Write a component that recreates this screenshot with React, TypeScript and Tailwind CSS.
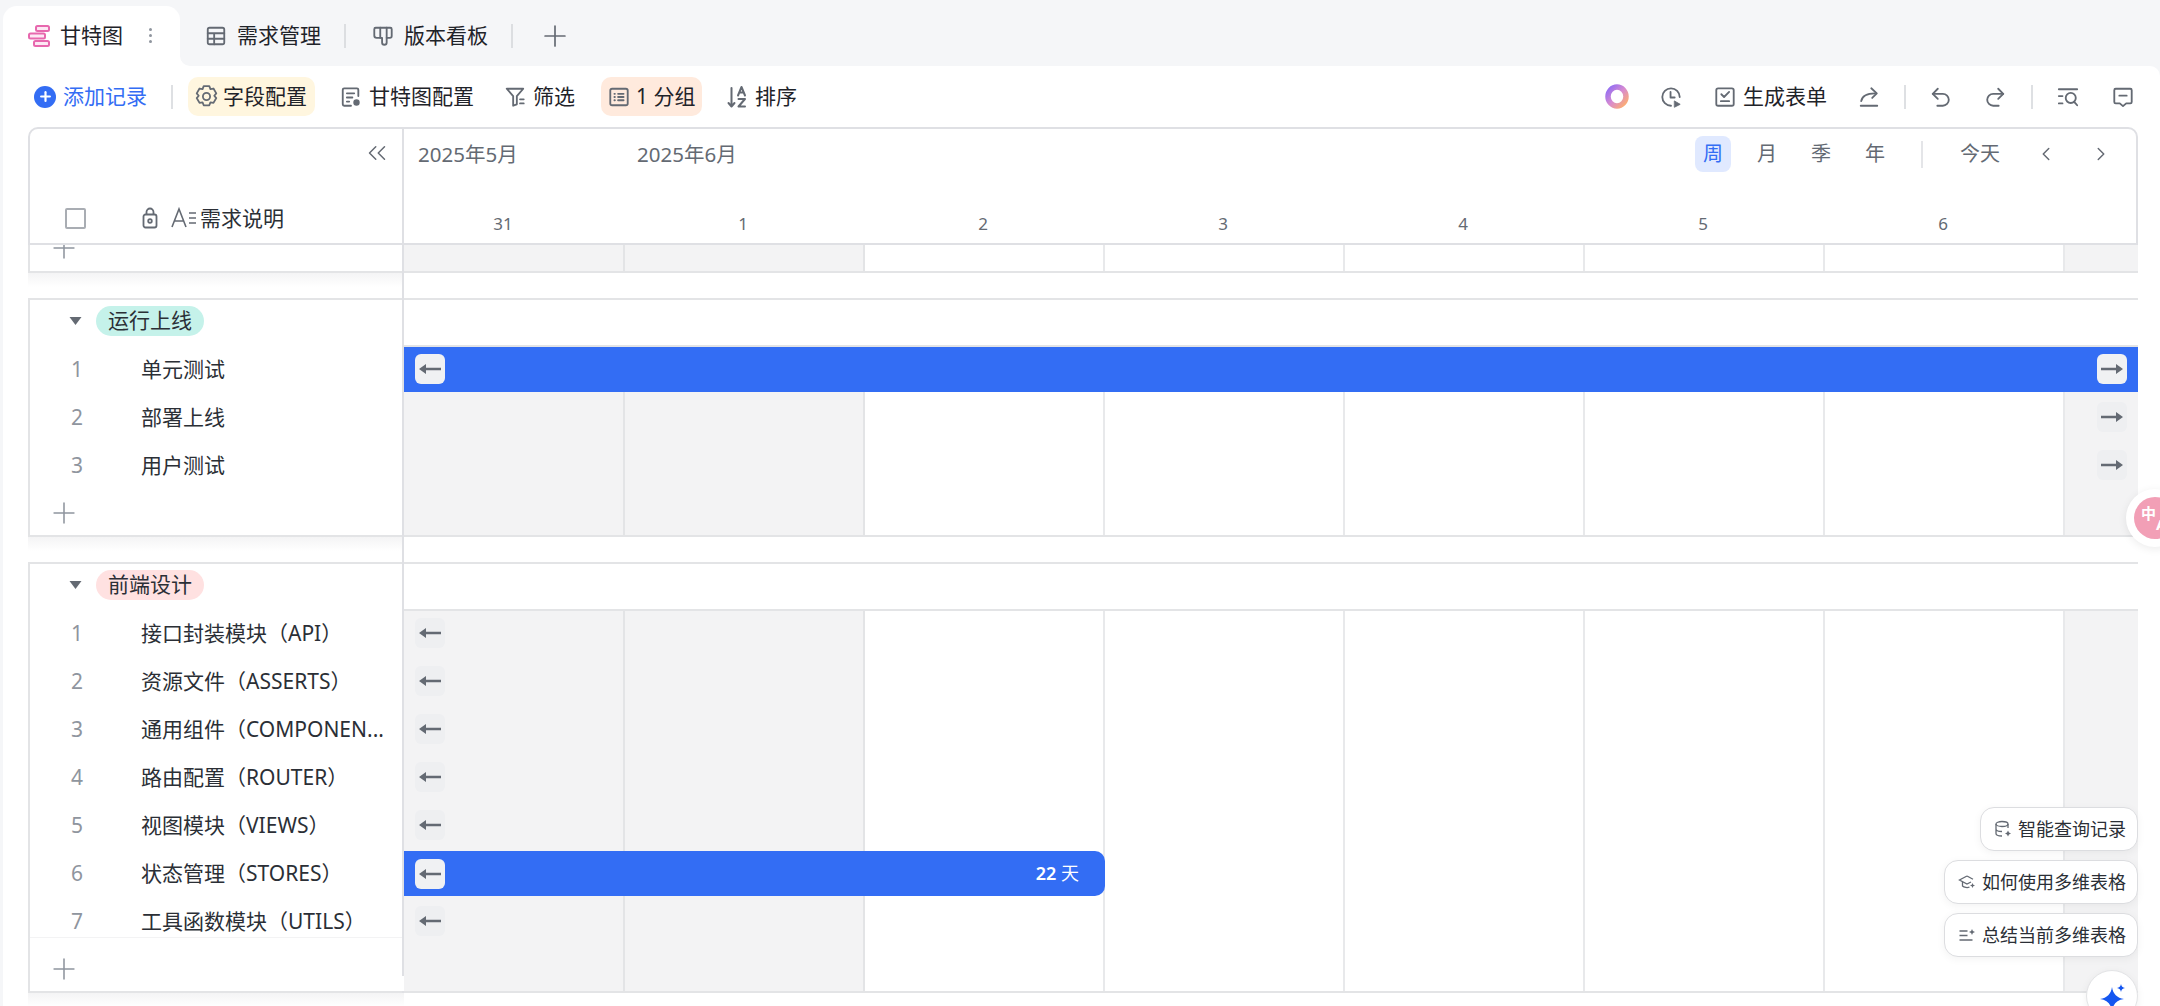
import type { ReactNode } from "react";
import { Plus, ChevronLeft, ChevronRight, ChevronsLeft } from "lucide-react";

const groupOne = ["单元测试", "部署上线", "用户测试"];
const groupTwo = [
  "接口封装模块（API）",
  "资源文件（ASSERTS）",
  "通用组件（COMPONEN...",
  "路由配置（ROUTER）",
  "视图模块（VIEWS）",
  "状态管理（STORES）",
  "工具函数模块（UTILS）",
];
const days = ["31", "1", "2", "3", "4", "5", "6"];

function Ico({ size = 22, children }: { size?: number; children: ReactNode }) {
  return (
    <svg
      width={size}
      height={size}
      viewBox="0 0 24 24"
      fill="none"
      stroke="#646a73"
      strokeWidth="2"
      strokeLinecap="round"
      strokeLinejoin="round"
      className="shrink-0"
    >
      {children}
    </svg>
  );
}

function GanttIcon() {
  return (
    <svg width="22" height="24" viewBox="0 0 22 24" fill="#fde8f4" stroke="#e768ae" strokeWidth="2" className="shrink-0">
      <rect x="8" y="2" width="13" height="5" rx="1.5" />
      <rect x="1" y="9.5" width="16" height="5" rx="1.5" />
      <rect x="6" y="17" width="15" height="5" rx="1.5" />
    </svg>
  );
}

function TableIcon() {
  return (
    <Ico>
      <rect x="3" y="3" width="18" height="18" rx="2" />
      <path d="M3 9h18M3 15h18M10 9v12" />
    </Ico>
  );
}

function KanbanIcon() {
  return (
    <Ico>
      <path d="M4 3h16a1.500 1.500 0 0 1 1.500 1.500V12a2 2 0 0 1-2 2H16v5a2.500 2.500 0 0 1-5 0V14H5a2.500 2.500 0 0 1-2.500-2.500V4.500A1.500 1.500 0 0 1 4 3z" />
      <path d="M9 3v11M16 3v11" />
    </Ico>
  );
}

function GearIcon() {
  return (
    <Ico size={27}>
      <path d="M9.500 2.800h5l1 2.600 2.700-.5 2.500 4.300-1.800 2.100 1.800 2.100-2.500 4.300-2.700-.5-1 2.600h-5l-1-2.600-2.700.5-2.500-4.300 1.800-2.100-1.800-2.100 2.500-4.300 2.700.5z" strokeWidth="1.600" />
      <circle cx="12" cy="12" r="3.200" strokeWidth="1.600" />
    </Ico>
  );
}

function DocGearIcon() {
  return (
    <Ico>
      <path d="M20 11V4a1.500 1.500 0 0 0-1.500-1.500h-14A1.500 1.500 0 0 0 3 4v16a1.500 1.500 0 0 0 1.500 1.500H12" />
      <path d="M7.500 8h8M7.500 12.500h6M7.500 17h2.500" />
      <circle cx="18" cy="18" r="2.600" fill="#646a73" strokeWidth="1.800" />
    </Ico>
  );
}

function FilterIcon() {
  return (
    <Ico>
      <path d="M3 3h18l-7 8v9l-4 1.500V11z" />
      <path d="M17.500 14.500h4M17.500 19h4" />
    </Ico>
  );
}

function GroupIcon() {
  return (
    <Ico>
      <rect x="2.500" y="3" width="19" height="18" rx="2" />
      <path d="M7 8.500h.5M7 12h.5M7 15.500h.5M11 8.500h6M11 12h6M11 15.500h6" />
    </Ico>
  );
}

function SortIcon() {
  return (
    <svg width="22" height="24" viewBox="0 0 22 24" fill="none" stroke="#646a73" strokeWidth="2" strokeLinecap="round" strokeLinejoin="round" className="shrink-0">
      <path d="M4.500 3v18M1.500 18l3 3.500 3-3.500" />
      <path d="M11 10.500 14.500 2l3.500 8.500M12.300 7.500h4.500" />
      <path d="M11.500 14h6.500l-6.500 7.500h6.500" />
    </svg>
  );
}

function RingIcon() {
  return (
    <svg width="24" height="25" viewBox="0 0 24 25" className="shrink-0">
      <defs>
        <linearGradient id="ring" x1="0" y1="0" x2="1" y2="1">
          <stop offset="0" stopColor="#8f6cf5" />
          <stop offset="0.5" stopColor="#d88bd0" />
          <stop offset="1" stopColor="#ffb06a" />
        </linearGradient>
      </defs>
      <ellipse cx="12" cy="12.500" rx="9" ry="9.500" fill="none" stroke="url(#ring)" strokeWidth="5.500" />
    </svg>
  );
}

function ClockIcon() {
  return (
    <Ico>
      <path d="M12 21.500a9.500 9.500 0 1 1 9.500-9.500" />
      <path d="M11.500 6.500v6h4.500" />
      <path d="M16 16.500l6 3.500-6 3z" fill="#646a73" strokeWidth="1" />
    </Ico>
  );
}

function FormIcon() {
  return (
    <Ico>
      <rect x="2.500" y="2.500" width="19" height="19" rx="2" />
      <path d="M8 9l3 3 5.500-5.500M7.500 16.500h9" />
    </Ico>
  );
}

function ShareIcon() {
  return (
    <Ico>
      <path d="M3 21.500h18" />
      <path d="M3.500 16.500c1-5.500 5-8.500 15-8.500" />
      <path d="M14.500 2.500l6 5.500-5 5" />
    </Ico>
  );
}

function UndoIcon() {
  return (
    <Ico>
      <path d="M8.500 3 3 8.500 8.500 14" />
      <path d="M3 8.500h11a6.500 6.500 0 0 1 0 13H8" />
    </Ico>
  );
}

function RedoIcon() {
  return (
    <Ico>
      <path d="M15.500 3 21 8.500 15.500 14" />
      <path d="M21 8.500H10a6.500 6.500 0 0 0 0 13h6" />
    </Ico>
  );
}

function SearchListIcon() {
  return (
    <Ico>
      <path d="M2 3.500h20M2 11h4M2 19h4" />
      <circle cx="15" cy="13" r="5.500" />
      <path d="M19 17.500l3 3.500" />
    </Ico>
  );
}

function CommentIcon() {
  return (
    <Ico>
      <path d="M4 3h16a1.500 1.500 0 0 1 1.500 1.500v13a1.500 1.500 0 0 1-1.500 1.500h-4.500L12 22l-3.500-3H4a1.500 1.500 0 0 1-1.500-1.500v-13A1.500 1.500 0 0 1 4 3z" />
      <path d="M8 10.500h8" />
    </Ico>
  );
}

function LockIcon() {
  return (
    <svg width="16" height="22" viewBox="0 0 16 22" fill="none" stroke="#646a73" strokeWidth="1.800" className="shrink-0">
      <rect x="1.500" y="7.500" width="13" height="13" rx="2" />
      <path d="M4.500 7.500V5a3.500 3.500 0 0 1 7 0v2.500" />
      <circle cx="8" cy="14" r="1.800" />
    </svg>
  );
}

function TextFieldIcon() {
  return (
    <svg width="26" height="22" viewBox="0 0 26 22" fill="none" stroke="#646a73" strokeWidth="1.600" className="shrink-0">
      <path d="M1 20 8 2l7 18M3.500 14h9" />
      <path d="M18 6h7M18 11h7M18 16h7" />
    </svg>
  );
}

function Caret() {
  return (
    <svg width="13" height="10" viewBox="0 0 13 10" fill="#646a73" className="shrink-0">
      <path d="M0.500 1h12L6.500 9z" />
    </svg>
  );
}

function Spark({ className }: { className: string }) {
  return (
    <svg viewBox="0 0 24 24" className={className} fill="currentColor">
      <path d="M12 0c1 7 5 11 12 12-7 1-11 5-12 12-1-7-5-11-12-12 7-1 11-5 12-12z" />
    </svg>
  );
}

function Arrow({ right = false }: { right?: boolean }) {
  return (
    <svg width="22" height="12" viewBox="0 0 22 12" fill="#646a73" className={right ? "rotate-180" : ""}>
      <path d="M0 6l7-5v3.800h15v2.400H7V11z" />
    </svg>
  );
}

function Handle({ right = false, solid = false }: { right?: boolean; solid?: boolean }) {
  return (
    <div className={`flex h-[30px] w-[30px] items-center justify-center rounded-[6px] ${solid ? "bg-[#f0f1f3]" : "bg-[#eeeff1]"}`}>
      <Arrow right={right} />
    </div>
  );
}

function TabDivider() {
  return <div className="h-6 w-0.5 bg-[#dcdee1]" />;
}

function ToolDivider({ className }: { className: string }) {
  return <div className={`h-[24px] w-0.5 bg-[#dee0e3] ${className}`} />;
}

function Row({ index, name }: { index: number; name: string }) {
  return (
    <div className="flex h-12 items-center">
      <span className="w-[94px] text-center text-[21px] text-[#8f959e]">{index}</span>
      <span className="ml-[17px] whitespace-nowrap text-[21px] text-[#2b2f36]">{name}</span>
    </div>
  );
}

function AddRow({ className }: { className: string }) {
  return (
    <div className={`flex items-center pl-[17px] ${className}`}>
      <Plus size={34} strokeWidth={1.1} color="#8f959e" />
    </div>
  );
}

function GroupHead({ label, tone }: { label: string; tone: string }) {
  return (
    <div className="flex h-[46px] items-center pb-[4px] pl-[39px]">
      <Caret />
      <span className={`ml-[14px] flex h-[30px] w-[108px] items-center justify-center rounded-full text-[21px] text-[#2b2f36] ${tone}`}>
        {label}
      </span>
    </div>
  );
}

function Shade({ className = "" }: { className?: string }) {
  return <div className={`h-[14px] bg-gradient-to-b from-[#f4f4f5] to-white ${className}`} />;
}

function Columns({ className, children }: { className: string; children?: ReactNode }) {
  return (
    <div className={`relative flex border-b-2 border-[#e3e4e6] ${className}`}>
      <div className="w-[221px] border-r-2 border-[#e3e4e6] bg-[#f3f3f4]" />
      <div className="w-[240px] border-r-2 border-[#e3e4e6] bg-[#f3f3f4]" />
      {[0, 1, 2, 3, 4].map((c) => (
        <div key={c} className="w-[240px] border-r-2 border-[#e8e9eb] bg-white" />
      ))}
      <div className="flex-1 bg-[#f3f3f4]" />
      {children}
    </div>
  );
}

function Chip({ icon, label }: { icon: ReactNode; label: string }) {
  return (
    <div className="flex h-[44px] items-center gap-[6px] rounded-[14px] border border-[#dcdde0] bg-white pl-[13px] pr-[11px] text-[18px] text-[#2b2f36] shadow-[0_2px_8px_rgba(0,0,0,0.05)]">
      {icon}
      {label}
    </div>
  );
}

export default function App() {
  return (
    <div className="relative h-screen w-full overflow-hidden bg-[#f5f6f8] text-[#1f2329] [font-family:'Noto_Sans','Noto_Sans_CJK_SC',sans-serif]">
      {/* tabs */}
      <div className="flex h-[66px] pl-[3px] text-[21px]">
        <div className="relative mt-[6px] flex w-[177px] items-center rounded-t-[14px] bg-white pb-[1px] pl-[25px]">
          <GanttIcon />
          <span className="ml-[10px]">甘特图</span>
          <span className="ml-[26px] flex flex-col gap-[3px]">
            <i className="h-[3px] w-[3px] rounded-full bg-[#8f959e]" />
            <i className="h-[3px] w-[3px] rounded-full bg-[#8f959e]" />
            <i className="h-[3px] w-[3px] rounded-full bg-[#8f959e]" />
          </span>
          <div className="absolute bottom-0 left-full h-[10px] w-[10px] bg-white">
            <div className="h-full w-full rounded-bl-[10px] bg-[#f5f6f8]" />
          </div>
        </div>
        <div className="ml-[25px] flex items-center gap-[10px] pt-[6px]">
          <TableIcon />
          <span>需求管理</span>
          <div className="ml-[13px]"><TabDivider /></div>
          <div className="ml-[16px]"><KanbanIcon /></div>
          <span>版本看板</span>
          <div className="ml-[13px]"><TabDivider /></div>
          <Plus size={34} strokeWidth={1.2} color="#646a73" className="ml-[15px]" />
        </div>
      </div>

      {/* white panel */}
      <div className="ml-[3px] h-[940px] rounded-tr-[10px] bg-white">
        <div className="flex h-[61px] items-center pl-[31px] pr-[26px] text-[21px]">
          <div className="flex h-[22px] w-[22px] items-center justify-center rounded-full bg-[#336df4]">
            <Plus size={15} strokeWidth={3.5} color="white" />
          </div>
          <span className="ml-[7px] text-[#336df4]">添加记录</span>
          <ToolDivider className="ml-[24px]" />
          <div className="ml-[15px] flex h-[39px] w-[127px] items-center gap-[3px] rounded-[10px] bg-[#fff6df] pl-[5px]">
            <GearIcon />
            <span>字段配置</span>
          </div>
          <div className="ml-[25px]"><DocGearIcon /></div>
          <span className="ml-[7px]">甘特图配置</span>
          <div className="ml-[30px]"><FilterIcon /></div>
          <span className="ml-[7px]">筛选</span>
          <div className="ml-[26px] flex h-[39px] w-[101px] items-center gap-[6px] rounded-[10px] bg-[#ffeadd] pl-[7px]">
            <GroupIcon />
            <span>1 分组</span>
          </div>
          <div className="ml-[25px]"><SortIcon /></div>
          <span className="ml-[6px]">排序</span>

          <div className="ml-auto"><RingIcon /></div>
          <div className="ml-[31px]"><ClockIcon /></div>
          <div className="ml-[32px]"><FormIcon /></div>
          <span className="ml-[7px]">生成表单</span>
          <div className="ml-[31px]"><ShareIcon /></div>
          <ToolDivider className="ml-[24px]" />
          <div className="ml-[24px]"><UndoIcon /></div>
          <div className="ml-[32px]"><RedoIcon /></div>
          <ToolDivider className="ml-[25px]" />
          <div className="ml-[24px]"><SearchListIcon /></div>
          <div className="ml-[33px]"><CommentIcon /></div>
        </div>

        {/* gantt */}
        <div className="ml-[25px] w-[2110px]">
          <div className="flex h-[118px] rounded-t-[10px] border-2 border-[#dfe0e4]">
            <div className="relative w-[374px] border-r-2 border-[#dfe0e4]">
              <ChevronsLeft size={30} strokeWidth={1.2} color="#646a73" className="absolute right-[10px] top-[9px]" />
              <div className="flex h-full items-end pb-[9px] pl-[35px]">
                <div className="flex items-center">
                  <div className="h-[21px] w-[21px] rounded-[2px] border-2 border-[#a9adb3]" />
                  <div className="ml-[56px]"><LockIcon /></div>
                  <div className="ml-[13px]"><TextFieldIcon /></div>
                  <span className="ml-[3px] text-[21px] text-[#2b2f36]">需求说明</span>
                </div>
              </div>
            </div>
            <div className="flex flex-1 flex-col text-[#646a73]">
              <div className="flex h-[62px] items-center pb-[12px] pl-[14px] pr-[24px] text-[20px]">
                <span className="w-[219px] text-[20.5px]">2025年5月</span>
                <span className="text-[20.5px]">2025年6月</span>
                <span className="ml-auto flex h-9 w-9 items-center justify-center rounded-[8px] bg-[#e0e9ff] text-[#336df4]">周</span>
                <span className="ml-[26px]">月</span>
                <span className="ml-[34px]">季</span>
                <span className="ml-[34px]">年</span>
                <div className="ml-[36px] h-[27px] w-0.5 bg-[#e4e5e8]" />
                <span className="ml-[37px]">今天</span>
                <ChevronLeft size={22} strokeWidth={1.6} className="ml-[35px]" />
                <ChevronRight size={22} strokeWidth={1.6} className="ml-[33px]" />
              </div>
              <div className="flex flex-1 items-center pt-[14px] text-[17px]">
                <div className="w-[219px] pr-[21px] text-center">{days[0]}</div>
                {days.slice(1).map((d) => (
                  <div key={d} className="w-[240px] text-center">{d}</div>
                ))}
              </div>
            </div>
          </div>

          <div className="flex">
            {/* left pane */}
            <div className="w-[376px] shrink-0 border-r-2 border-[#dfe0e4] bg-white">
              <div className="h-[28px] overflow-hidden border-b-2 border-l-2 border-[#e3e4e6]">
                <AddRow className="-mt-[9px] h-6" />
              </div>
              <Shade />
              <div className="h-[11px]" />
              <div className="border-b-2 border-l-2 border-t-2 border-[#e3e4e6]">
                <GroupHead label="运行上线" tone="bg-[#c5f2ea]" />
                {groupOne.map((name, i) => (
                  <Row key={name} index={i + 1} name={name} />
                ))}
                <AddRow className="h-[45px]" />
              </div>
              <Shade />
              <div className="h-[11px]" />
              <div className="relative border-b-2 border-l-2 border-t-2 border-[#e3e4e6]">
                <GroupHead label="前端设计" tone="bg-[#ffe1e1]" />
                {groupTwo.map((name, i) => (
                  <Row key={name} index={i + 1} name={name} />
                ))}
                <AddRow className="relative -mt-[9px] h-[54px] border-t border-[#f3f3f4] bg-white pt-[9px]" />
                <div className="absolute -right-[2px] bottom-0 h-[15px] w-[2px] bg-white" />
              </div>
              <Shade className="relative z-10 -mr-[2px]" />
            </div>

            {/* timeline */}
            <div className="flex-1 bg-white">
              <Columns className="h-[28px]" />
              <div className="h-[25px]" />
              <div className="h-[49px] border-b-2 border-t-2 border-[#e3e4e6]" />
              <Columns className="h-[190px]">
                <div className="absolute inset-0 flex flex-col">
                  <div className="flex h-[45px] items-center justify-between bg-[#336df4] px-[11px]">
                    <Handle solid />
                    <Handle right solid />
                  </div>
                  <div className="flex h-[144px] flex-col items-end pr-[11px] pt-[10px]">
                    <div className="h-12"><Handle right /></div>
                    <div className="h-12"><Handle right /></div>
                  </div>
                </div>
              </Columns>
              <div className="h-[25px]" />
              <div className="h-[49px] border-b-2 border-t-2 border-[#e3e4e6]" />
              <Columns className="h-[382px]">
                <div className="absolute inset-0 flex flex-col pt-[7px]">
                  {[0, 1, 2, 3, 4].map((r) => (
                    <div key={r} className="h-12 pl-[11px]"><Handle /></div>
                  ))}
                  <div className="-mt-[7px] flex h-[45px] w-[701px] items-center justify-between rounded-r-[10px] bg-[#336df4] pl-[11px] pr-[26px]">
                    <Handle solid />
                    <span className="text-[18px] text-white"><b className="font-semibold">22</b> 天</span>
                  </div>
                  <div className="mt-[10px] pl-[11px]"><Handle /></div>
                </div>
              </Columns>
            </div>
          </div>
        </div>
      </div>

      {/* floating */}
      <div className="absolute left-[2126px] top-[489px] flex h-[58px] w-[58px] items-center justify-center rounded-full bg-white shadow-[0_2px_8px_rgba(0,0,0,0.08)]">
        <div className="flex h-[42px] w-[42px] items-center rounded-full bg-[#f29fb6] pl-[7px] text-[15px] font-bold leading-none text-white">
          <span className="-mt-[10px]">中</span>
          <span className="mt-[12px]">A</span>
        </div>
      </div>
      <div className="absolute right-[22px] top-[807px] flex flex-col items-end gap-[9px]">
        <Chip
          label="智能查询记录"
          icon={
            <svg width="18" height="18" viewBox="0 0 18 18" fill="none" stroke="#646a73" strokeWidth="1.300">
              <ellipse cx="8" cy="4" rx="6" ry="2.500" />
              <path d="M2 4v9.500c0 1.500 2.500 2.500 6 2.500M2 9c0 1.500 2.500 2.500 6 2.500M14 4v4" />
              <path d="M14 10.500l1 2 2 1-2 1-1 2-1-2-2-1 2-1z" fill="#646a73" stroke="none" />
            </svg>
          }
        />
        <Chip
          label="如何使用多维表格"
          icon={
            <svg width="18" height="18" viewBox="0 0 18 18" fill="none" stroke="#646a73" strokeWidth="1.300">
              <path d="M9 3 1.500 7 9 11l4-2" />
              <path d="M9 3l6 3.200M4.500 9v4c1.500 1.500 5 2 7 1" />
              <path d="M14.500 10l.8 1.700 1.700.8-1.700.8-.8 1.700-.8-1.700-1.700-.8 1.700-.8z" fill="#646a73" stroke="none" />
            </svg>
          }
        />
        <Chip
          label="总结当前多维表格"
          icon={
            <svg width="18" height="18" viewBox="0 0 18 18" fill="none" stroke="#646a73" strokeWidth="1.300">
              <path d="M1.500 5h8M1.500 9.500h8M1.500 14h13" />
              <path d="M14 3l.9 2.100 2.100.9-2.100.9L14 9l-.9-2.100L11 6l2.100-.9z" fill="#646a73" stroke="none" />
            </svg>
          }
        />
      </div>
      <div className="absolute left-[2086px] top-[970px] flex h-[52px] w-[52px] items-start justify-center rounded-full border border-[#e3e4e6] bg-white pt-[16px] text-[#1456f0] shadow-[0_2px_8px_rgba(0,0,0,0.06)]">
        <Spark className="h-[24px] w-[24px]" />
        <Spark className="absolute left-[30px] top-[13px] h-[8px] w-[8px]" />
      </div>
    </div>
  );
}
